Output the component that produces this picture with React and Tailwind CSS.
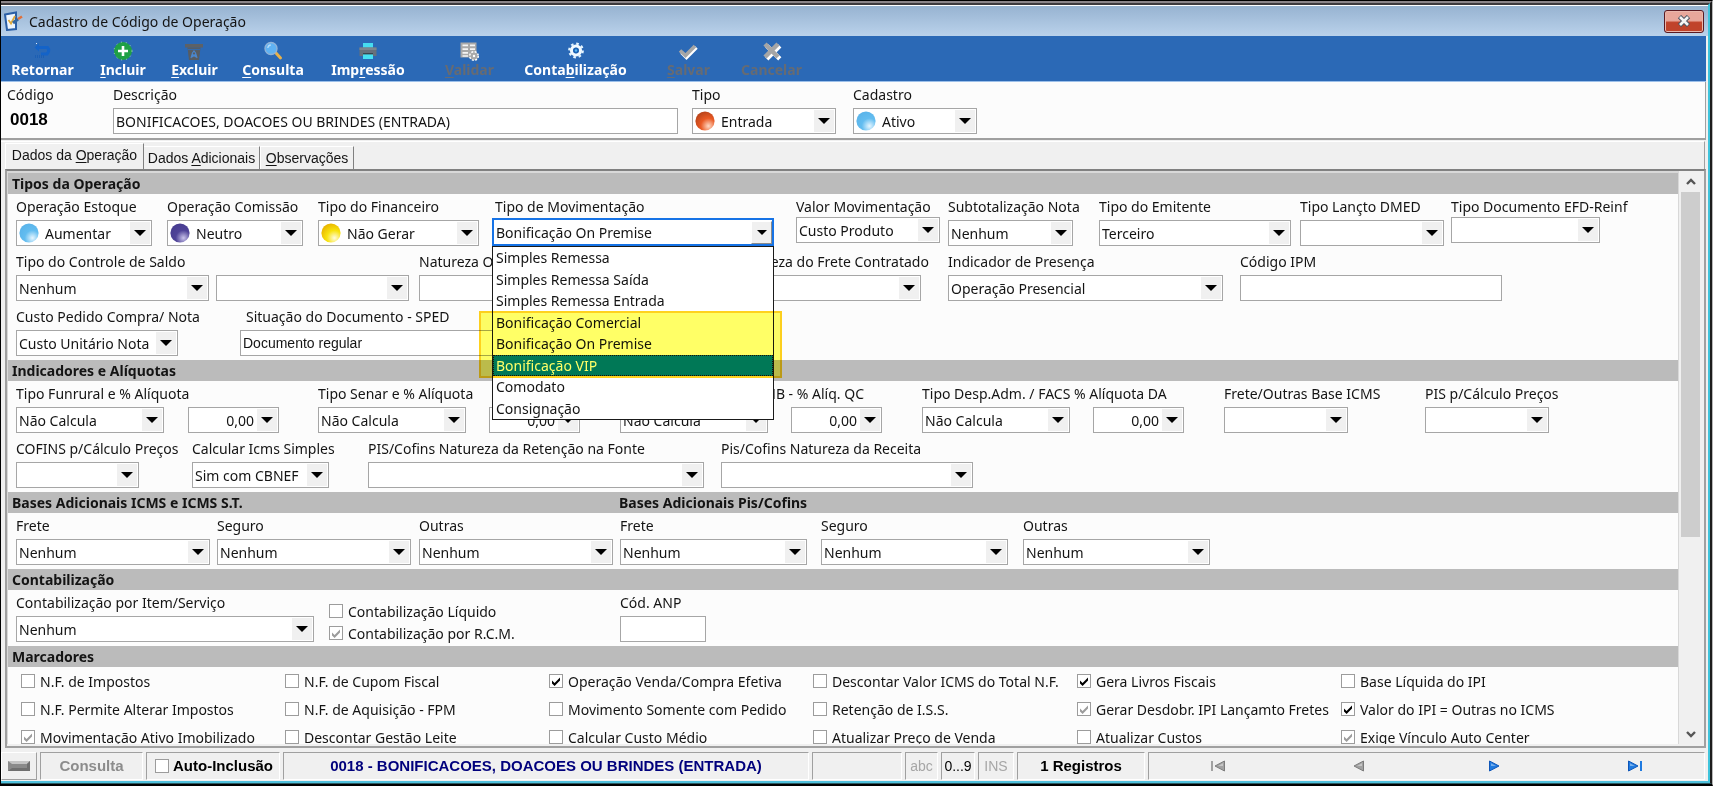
import { useId } from 'react';

const BALLS = {
  blue: ['#e6f6ff', '#63bdf0', '#5ab4ea'],
  purple: ['#c9c3ea', '#4f4398', '#473c90'],
  yellow: ['#fffbe0', '#f8e30c', '#e8b400'],
  orange: ['#ffd9c4', '#ea5a24', '#b8431a'],
};

function Ball({ tone }) {
  const id = useId();
  const [light, mid, edge] = BALLS[tone];
  return (
    <svg viewBox="0 0 20 20" className="pointer-events-none z-10 ml-[3px] size-5 self-center [grid-area:1/1]" aria-hidden="true">
      <defs>
        <radialGradient id={id} cx="0.68" cy="0.76" r="0.8">
          <stop offset="0" stopColor={light} />
          <stop offset="0.5" stopColor={mid} />
          <stop offset="1" stopColor={edge} />
        </radialGradient>
      </defs>
      <circle cx="10" cy="10" r="9.6" fill={`url(#${id})`} />
    </svg>
  );
}

function Arrow({ raised }) {
  return (
    <span
      className={
        raised
          ? 'pointer-events-none z-10 mr-[2px] flex h-[23px] w-[21px] items-center justify-center self-center justify-self-end border border-t-white border-l-white border-r-[#8a8a8a] border-b-[#8a8a8a] bg-[#f0f0f0] [grid-area:1/1]'
          : 'pointer-events-none z-10 mr-[2px] flex h-[22px] w-5 items-center justify-center self-center justify-self-end bg-[#f0f0f0] [grid-area:1/1]'
      }
    >
      <svg viewBox="0 0 12 6" className={raised ? 'h-[5px] w-[10px]' : 'h-[6px] w-3'} aria-hidden="true">
        <path d="M0 0h12L6 6z" fill="#000" />
      </svg>
    </span>
  );
}

function Field({ label, className = '', control = '', value = '', kind = 'select', ball, tight, focus, labelClass = '', small }) {
  const id = useId();
  const box = `w-full rounded-none bg-white text-[#141414] outline-none [grid-area:1/1] ${
    focus ? 'h-7 border-2 border-[#1673e6]' : 'h-[26px] border border-[#a6a6a6]'
  } ${small ? 'font-[Liberation_Sans,sans-serif] text-[14px]' : ''}`;
  return (
    <div className={`flex shrink-0 flex-col ${tight ? 'gap-px' : focus ? 'gap-[2px]' : 'gap-1'} ${className}`}>
      {label ? (
        <label htmlFor={id} className={`h-[18px] leading-[18px] whitespace-nowrap ${labelClass}`}>
          {label}
        </label>
      ) : (
        <span className="h-[18px]" />
      )}
      <div className={`grid ${control}`}>
        {kind === 'select' && (
          <>
            <select id={id} aria-label={label ? undefined : 'Complemento'} defaultValue={value} className={`${box} appearance-none ${ball ? 'pl-7' : 'pl-[2px]'}`}>
              <option value={value}>{value}</option>
            </select>
            {ball && <Ball tone={ball} />}
            <Arrow raised={focus} />
          </>
        )}
        {kind === 'number' && (
          <>
            <input id={id} aria-label={label ? undefined : '% Alíquota'} defaultValue={value} className={`${box} pr-6 text-right`} />
            <Arrow />
          </>
        )}
        {kind === 'text' && <input id={id} aria-label={label ? undefined : 'Valor'} defaultValue={value} className={`${box} px-[2px]`} />}
      </div>
    </div>
  );
}

function Check({ label, checked, disabled, bold }) {
  return (
    <label className={`flex items-center whitespace-nowrap ${bold ? 'gap-1 font-bold text-black' : 'gap-[5px]'}`}>
      <span className="grid size-[14px] shrink-0">
        <input type="checkbox" defaultChecked={checked} disabled={disabled} className="size-[14px] appearance-none border border-[#9c9c9c] bg-white [grid-area:1/1]" />
        {checked && (
          <svg viewBox="0 0 14 14" className="pointer-events-none size-[14px] [grid-area:1/1]" aria-hidden="true">
            <path d="M3 6.4 5.6 9 11 3.4V6.6L5.6 12 3 9.4z" fill={disabled ? '#9c9c9c' : '#000'} />
          </svg>
        )}
      </span>
      {label}
    </label>
  );
}

function Section({ title, second, flush, children }) {
  return (
    <section>
      <h2 className="flex h-[21px] items-center bg-[#bbbbbb] pl-1 font-bold text-[#141414]">
        <span className={second ? 'w-[607px]' : ''}>{title}</span>
        {second && <span>{second}</span>}
      </h2>
      <div className={`flex flex-col gap-[7px] pb-1 pl-2 ${flush ? '' : 'pt-1'}`}>{children}</div>
    </section>
  );
}

function Row({ children }) {
  return <div className="flex items-start">{children}</div>;
}

const MOVEMENTS = [
  'Simples Remessa',
  'Simples Remessa Saída',
  'Simples Remessa Entrada',
  'Bonificação Comercial',
  'Bonificação On Premise',
  'Bonificação VIP',
  'Comodato',
  'Consignação',
];

function MovementField() {
  return (
    <div className="relative w-[304px] shrink-0">
      <Field label="Tipo de Movimentação" value="Bonificação On Premise" focus control="w-[282px]" labelClass="pl-[3px]" />
      <ul role="listbox" aria-label="Tipo de Movimentação" className="absolute top-12 left-0 z-20 grid h-[174px] w-[282px] grid-rows-8 border border-[#1a1a1a] bg-white">
        {MOVEMENTS.map((m) => (
          <li
            key={m}
            role="option"
            aria-selected={m === 'Bonificação VIP'}
            className={`flex items-center pl-[3px] ${m === 'Bonificação VIP' ? 'bg-[#0078d7] text-white outline-1 -outline-offset-1 outline-dotted outline-[#201000]' : ''}`}
          >
            {m}
          </li>
        ))}
      </ul>
      <div className="pointer-events-none absolute top-[113px] -left-[13px] z-30 h-[67px] w-[303px] border-2 border-[#ffd21e] bg-[#ffff66] mix-blend-multiply" />
    </div>
  );
}

const MARKS = [
  ['N.F. de Impostos'],
  ['N.F. de Cupom Fiscal'],
  ['Operação Venda/Compra Efetiva', 'on'],
  ['Descontar Valor ICMS do Total N.F.'],
  ['Gera Livros Fiscais', 'on'],
  ['Base Líquida do IPI'],
  ['N.F. Permite Alterar Impostos'],
  ['N.F. de Aquisição - FPM'],
  ['Movimento Somente com Pedido'],
  ['Retenção de I.S.S.'],
  ['Gerar Desdobr. IPI Lançamto Fretes', 'locked'],
  ['Valor do IPI = Outras no ICMS', 'on'],
  ['Movimentação Ativo Imobilizado', 'locked'],
  ['Descontar Gestão Leite'],
  ['Calcular Custo Médio'],
  ['Atualizar Preço de Venda'],
  ['Atualizar Custos'],
  ['Exige Vínculo Auto Center', 'locked'],
];

const ICONS = {
  back: (
    <>
      <path d="M5 6.5h9.5q2.500 3-.5 6.500H8" fill="none" stroke="#1463c8" strokeWidth="3" />
      <path d="M1.5 6.5 6 2.5v8z" fill="#1463c8" />
      <path d="M2 15.500h10" stroke="#1c5fb4" strokeWidth="3" strokeDasharray="1 1" />
      <path d="M3 2h1v1H3z" fill="#dfeeff" />
    </>
  ),
  add: (
    <>
      <circle cx="10" cy="10" r="9" fill="#1fa045" stroke="#9fd3b8" strokeWidth="1" strokeDasharray="1 4" />
      <path d="M10 5v10M5 10h10" stroke="#fff" strokeWidth="2.6" />
    </>
  ),
  trash: (
    <>
      <path d="M1 3h18v3.500H1z" fill="#5d6166" />
      <path d="M3.500 6.500h13L15 19H5z" fill="#575c62" />
      <path d="M4 8.500h12" stroke="#3569a8" strokeWidth="1.200" />
      <path d="M7 17 8.500 12l1.500-2 1.500 2 1.500 5M8 13l4 3M12 13l-4 3" fill="none" stroke="#4a86cc" strokeWidth="1.200" />
    </>
  ),
  search: (
    <>
      <path d="m12.5 11.5 5 5.5" stroke="#e8b24a" strokeWidth="3" strokeLinecap="round" />
      <circle cx="8" cy="7.5" r="6" fill="#5fb2f3" stroke="#8fb3d8" strokeWidth="1.4" />
      <path d="M4.8 7a3.4 3.4 0 0 1 3-3" stroke="#b5dcfb" strokeWidth="1.3" fill="none" />
    </>
  ),
  print: (
    <>
      <path d="M5 2h10v5H5z" fill="#46dcf0" />
      <path d="M1.500 6.500h17v8.500h-17z" fill="#66717c" />
      <path d="M1.500 6.500h17v2.500h-17z" fill="#7b868f" />
      <path d="M5 13h10v5H5z" fill="#46e0f2" />
      <path d="M5 12h10v1.4H5z" fill="#3a4650" />
    </>
  ),
  validate: (
    <>
      <path d="M1.5 1.5h16v15h-16z" fill="#a9a9a9" />
      <path d="M3.5 3.5h5.500v1.800H3.500zM11 3.500h5v1.800h-5zM3.500 7.200h5.500v1.800H3.500zM11 7.200h5v1.800h-5zM3.500 10.900h5.500v1.800H3.500zM3.500 14.300h5.500v1.400H3.500z" fill="#f4f4f4" />
      <circle cx="15" cy="15" r="4.300" fill="#a9a9a9" stroke="#fff" strokeWidth="1.4" strokeDasharray="2 1.4" />
      <circle cx="15" cy="15" r="1.200" fill="#fff" />
    </>
  ),
  gear: (
    <>
      <circle cx="10" cy="9.500" r="4.500" fill="none" stroke="#f2faff" strokeWidth="3.200" />
      <circle cx="10" cy="9.500" r="6.800" fill="none" stroke="#e3f4ff" strokeWidth="2.200" strokeDasharray="2.600 2.740" />
      <circle cx="10" cy="9.500" r="2.800" fill="#1c62b4" />
      <circle cx="10" cy="9.500" r="1.200" fill="#58b7f0" />
    </>
  ),
  save: (
    <>
      <path d="m2.500 10.500 5 5 10-10" fill="none" stroke="#fff" strokeWidth="3.400" transform="translate(1 1)" />
      <path d="m2 9.500 5.500 5 9.500-9.500" fill="none" stroke="#a6a6a6" strokeWidth="3.600" />
    </>
  ),
  cancel: (
    <>
      <path d="m4 4 13 13M17 4 4 17" stroke="#fff" strokeWidth="4.500" transform="translate(.8 .8)" />
      <path d="m3 3 13 13M16 3 3 16" stroke="#a6a6a6" strokeWidth="4.500" />
    </>
  ),
};

const TOOLS = [
  { w: 'w-[83px]', icon: 'back', pre: 'Retornar', key: '', post: '' },
  { w: 'w-[78px]', icon: 'add', pre: '', key: 'I', post: 'ncluir' },
  { w: 'w-[65px]', icon: 'trash', pre: '', key: 'E', post: 'xcluir' },
  { w: 'w-[92px]', icon: 'search', pre: '', key: 'C', post: 'onsulta' },
  { w: 'w-[98px]', icon: 'print', pre: 'Imp', key: 'r', post: 'essão' },
  { w: 'w-[105px]', icon: 'validate', pre: '', key: 'V', post: 'alidar', off: true },
  { w: 'w-[107px]', icon: 'gear', pre: 'Conta', key: 'b', post: 'ilização' },
  { w: 'w-[119px]', icon: 'save', pre: '', key: 'S', post: 'alvar', off: true },
  { w: 'w-[47px]', icon: 'cancel', pre: 'Cancelar', key: '', post: '', off: true },
];

function Tool({ w, icon, pre, key2, post, off }) {
  return (
    <div className={`flex shrink-0 justify-center ${w}`}>
      <button type="button" disabled={off} className={`flex flex-col items-center font-bold whitespace-nowrap ${off ? 'text-[#666b73]' : 'text-white'}`}>
        <svg viewBox="0 0 20 20" className="size-5" aria-hidden="true">
          {ICONS[icon]}
        </svg>
        <span className="text-[14px] leading-[17px]">
          {pre}
          <u className="underline-offset-2">{key2}</u>
          {post}
        </span>
      </button>
    </div>
  );
}

const PANE = 'flex h-7 shrink-0 items-center border border-t-[#a0a0a0] border-l-[#a0a0a0] border-r-white border-b-white';

function Nav({ label, last, back, on }) {
  const fill = on ? '#1f7ae0' : '#a2a2a2';
  const edge = on ? '#0f56b8' : '#7c7c7c';
  return (
    <button type="button" aria-label={label} className="flex flex-1 justify-center">
      <svg viewBox="0 0 16 12" className={`h-3 w-4 ${back ? '-scale-x-100' : ''}`} aria-hidden="true">
        <path d="M1.500 1 11 6l-9.500 5z" fill={fill} stroke={edge} />
        <path d="M3 3.200 8 6H3z" fill="#fff" opacity=".4" />
        {last && <path d="M13 1h2v10h-2z" fill={fill} />}
      </svg>
    </button>
  );
}

export default function App() {
  return (
    <div className="h-screen overflow-hidden border-t border-r border-b-2 border-l border-t-black border-r-[#b8b8b8] border-b-black border-l-black font-[Noto_Sans,sans-serif] text-[14px] text-[#141414]">
      <div className="h-full border-t-2 border-r-2 border-b border-t-[#8c868a] border-r-[#1d1d1d] border-b-[#2b5a60]">
        <div className="flex h-full flex-col border-t-2 border-r-2 border-b-2 border-t-[#3d3a3d] border-r-[#3fc4dc] border-b-[#4fc0dc] bg-[#f0f0f0]">
          <header className="flex h-[31px] shrink-0 items-center border-t border-white bg-linear-to-b from-[#97b3d1] to-[#bad2eb] pl-[3px]">
            <svg viewBox="0 0 20 20" className="size-5" aria-hidden="true">
              <path d="M1 3.500 12 1.500v16.500L3 19z" fill="#eef5fd" stroke="#2a5ea6" strokeWidth="2" />
              <path d="m4.500 9 2.500 3.500 4-7.500" fill="none" stroke="#e0a93a" strokeWidth="1.800" />
              <path d="m9 12 5-4" stroke="#34659f" strokeWidth="3" />
              <path d="m14 8 4-2.500" stroke="#e0703a" strokeWidth="2.600" />
            </svg>
            <h1 className="flex-1 pl-[5px]">Cadastro de Código de Operação</h1>
            <button type="button" aria-label="Fechar" className="mr-[4px] flex h-[23px] w-10 items-center justify-center rounded-[3px] border border-[#5a1a22] bg-linear-to-b from-[#e8a79b] from-45% to-[#c0432b] to-55% shadow-[inset_0_0_0_1px_#e9b8ae]">
              <svg viewBox="0 0 14 12" className="h-3 w-[14px]" aria-hidden="true">
                <path d="m2.500 1.500 9 9M11.500 1.500l-9 9" stroke="#4b5563" strokeWidth="4.600" />
                <path d="m3 2 8 8M11 2l-8 8" stroke="#f4f4f4" strokeWidth="2.600" />
              </svg>
            </button>
          </header>

          <nav className="mr-[2px] flex h-[46px] shrink-0 items-start border-b border-[#9cc0ea] bg-[#2b69b6] pt-[5px]">
            {TOOLS.map(({ key, ...t }) => (
              <Tool key={t.icon} key2={key} {...t} />
            ))}
          </nav>

          <div className="mr-[2px] flex h-[58px] shrink-0 items-start border-r border-b-2 border-[#a0a0a0] bg-[#fcfcfc] pt-1 pl-[6px]">
            <div className="flex w-[106px] shrink-0 flex-col gap-1">
              <span className="h-[18px] leading-[18px]">Código</span>
              <output className="pl-[3px] font-[Liberation_Sans,sans-serif] text-[17px] leading-6 font-bold text-black">0018</output>
            </div>
            <Field label="Descrição" kind="text" value="BONIFICACOES, DOACOES OU BRINDES (ENTRADA)" className="w-[579px]" control="w-[565px]" />
            <Field label="Tipo" ball="orange" value="Entrada" className="w-[161px]" control="w-36" />
            <Field label="Cadastro" ball="blue" value="Ativo" control="w-[124px]" />
          </div>

          <div role="tablist" className="mt-px mr-[3px] flex h-7 shrink-0 items-end border-t border-r border-t-white border-r-[#a0a0a0] pl-1 font-[Liberation_Sans,sans-serif] text-[14px]">
            <button role="tab" aria-selected="true" type="button" className="h-[26px] w-[139px] border-t border-r border-l border-t-white border-r-[#808080] border-l-white pb-[2px]">
              Dados da <u className="underline-offset-2">O</u>peração
            </button>
            <button role="tab" aria-selected="false" type="button" className="h-[23px] w-[116px] border-t border-r border-t-white border-r-[#808080]">
              Dados <u className="underline-offset-2">A</u>dicionais
            </button>
            <button role="tab" aria-selected="false" type="button" className="h-[23px] w-[94px] border-t border-r border-l border-t-white border-r-[#808080] border-l-white">
              <u className="underline-offset-2">O</u>bservações
            </button>
          </div>

          <main className="mr-[2px] ml-1 flex min-h-0 flex-1 border-t-2 border-r-2 border-b-2 border-l-2 border-t-[#808080] border-r-[#a0a0a0] border-b-[#a0a0a0] border-l-[#a0a0a0]">
            <div className="mb-[2px] flex min-w-0 flex-1">
              <div className="min-w-0 flex-1 overflow-hidden border-t-2 border-r border-l border-[#d8d8d8] bg-[#fcfcfc]">
                <Section title="Tipos da Operação">
                  <Row>
                    <Field label="Operação Estoque" ball="blue" value="Aumentar" className="w-[151px]" control="w-[136px]" />
                    <Field label="Operação Comissão" ball="purple" value="Neutro" className="w-[151px]" control="w-[136px]" />
                    <Field label="Tipo do Financeiro" ball="yellow" value="Não Gerar" className="w-[174px]" control="w-[161px]" />
                    <MovementField />
                    <Field label="Valor Movimentação" tight value="Custo Produto" className="w-[152px]" control="w-36" />
                    <Field label="Subtotalização Nota" value="Nenhum" className="w-[151px]" control="w-[125px]" />
                    <Field label="Tipo do Emitente" value="Terceiro" className="w-[201px]" control="w-48" />
                    <Field label="Tipo Lançto DMED" className="w-[151px]" control="w-36" />
                    <Field label="Tipo Documento EFD-Reinf" tight control="w-[149px]" />
                  </Row>
                  <Row>
                    <Field label="Tipo do Controle de Saldo" value="Nenhum" className="w-[200px]" control="w-[193px]" />
                    <Field className="w-[203px]" control="w-[193px]" />
                    <Field label="Natureza Operação" kind="text" className="w-[314px]" control="w-[300px]" />
                    <Field label="Natureza do Frete Contratado" className="w-[215px]" control="w-[188px]" />
                    <Field label="Indicador de Presença" value="Operação Presencial" className="w-[292px]" control="w-[275px]" />
                    <Field label="Código IPM" kind="text" control="w-[262px]" />
                  </Row>
                  <Row>
                    <Field label="Custo Pedido Compra/ Nota" value="Custo Unitário Nota" className="w-[224px]" control="w-[162px]" />
                    <Field label="Situação do Documento - SPED" kind="text" small value="Documento regular" labelClass="pl-[6px]" control="w-[500px]" />
                  </Row>
                </Section>

                <Section title="Indicadores e Alíquotas">
                  <Row>
                    <Field label="Tipo Funrural e % Alíquota" value="Não Calcula" className="w-[172px]" control="w-[148px]" />
                    <Field kind="number" value="0,00" className="w-[130px]" control="w-[91px]" />
                    <Field label="Tipo Senar e % Alíquota" value="Não Calcula" className="w-[171px]" control="w-[148px]" />
                    <Field kind="number" value="0,00" className="w-[131px]" control="w-[91px]" />
                    <Field label="Tipo Qual. Carne / FUNB - % Alíq. QC" value="Não Calcula" className="w-[171px]" labelClass="flex w-[244px] justify-end" control="w-[148px]" />
                    <Field kind="number" value="0,00" className="w-[131px]" control="w-[91px]" />
                    <Field label="Tipo Desp.Adm. / FACS % Alíquota DA" value="Não Calcula" className="w-[171px]" control="w-[148px]" />
                    <Field kind="number" value="0,00" className="w-[131px]" control="w-[91px]" />
                    <Field label="Frete/Outras Base ICMS" className="w-[201px]" control="w-[124px]" />
                    <Field label="PIS p/Cálculo Preços" control="w-[124px]" />
                  </Row>
                  <Row>
                    <Field label="COFINS p/Cálculo Preços" className="w-44" control="w-[123px]" />
                    <Field label="Calcular Icms Simples" value="Sim com CBNEF" className="w-44" control="w-[137px]" />
                    <Field label="PIS/Cofins Natureza da Retenção na Fonte" className="w-[353px]" control="w-[336px]" />
                    <Field label="Pis/Cofins Natureza da Receita" control="w-[252px]" />
                  </Row>
                </Section>

                <Section title="Bases Adicionais ICMS e ICMS S.T." second="Bases Adicionais Pis/Cofins">
                  <Row>
                    <Field label="Frete" value="Nenhum" className="w-[201px]" control="w-[194px]" />
                    <Field label="Seguro" value="Nenhum" className="w-[202px]" control="w-[194px]" />
                    <Field label="Outras" value="Nenhum" className="w-[201px]" control="w-[194px]" />
                    <Field label="Frete" value="Nenhum" className="w-[201px]" control="w-[187px]" />
                    <Field label="Seguro" value="Nenhum" className="w-[202px]" control="w-[187px]" />
                    <Field label="Outras" value="Nenhum" control="w-[187px]" />
                  </Row>
                </Section>

                <Section title="Contabilização">
                  <Row>
                    <Field label="Contabilização por Item/Serviço" value="Nenhum" className="w-[313px]" control="w-[298px]" />
                    <div className="flex w-[291px] shrink-0 flex-col gap-1 pt-2">
                      <div className="flex h-[18px] items-center">
                        <Check label="Contabilização Líquido" />
                      </div>
                      <div className="flex h-[18px] items-center">
                        <Check label="Contabilização por R.C.M." checked disabled />
                      </div>
                    </div>
                    <Field label="Cód. ANP" kind="text" control="w-[86px]" />
                  </Row>
                </Section>

                <Section title="Marcadores" flush>
                  <div className="grid auto-rows-[28px] grid-cols-[repeat(6,264px)] pl-[5px]">
                    {MARKS.map(([label, state]) => (
                      <Check key={label} label={label} checked={!!state} disabled={state === 'locked'} />
                    ))}
                  </div>
                </Section>
              </div>

              <div className="mr-1 ml-[2px] flex w-[19px] shrink-0 flex-col bg-[#f0f0f0]" aria-hidden="true">
                <span className="flex h-[21px] items-center justify-center">
                  <svg viewBox="0 0 10 8" className="h-2 w-[10px]">
                    <path d="m1 6 4-4 4 4" fill="none" stroke="#555" strokeWidth="2.400" />
                  </svg>
                </span>
                <span className="flex flex-1 flex-col">
                  <span className="h-[65%] bg-[#cdcdcd]" />
                </span>
                <span className="flex h-[21px] items-center justify-center">
                  <svg viewBox="0 0 10 8" className="h-2 w-[10px]">
                    <path d="m1 2 4 4 4-4" fill="none" stroke="#555" strokeWidth="2.400" />
                  </svg>
                </span>
              </div>
            </div>
          </main>

          <footer className="mt-1 mb-px flex shrink-0 gap-[3px] pr-[3px] font-[Liberation_Sans,sans-serif] text-[15px]">
            <button type="button" aria-label="Painel" className="flex h-7 w-9 items-center justify-center border border-t-white border-l-white border-r-[#a0a0a0] border-b-[#a0a0a0]">
              <svg viewBox="0 0 22 10" className="h-[10px] w-[22px]" aria-hidden="true">
                <path d="M0 0h22v10H0z" fill="#8a8a8a" />
                <path d="M0 0h22l-3 3H4z" fill="#c4c4c4" />
                <path d="M0 10h22V0l-3 3v4H4z" fill="#6f6f6f" />
              </svg>
            </button>
            <div className={`${PANE} w-[103px] justify-center font-bold text-[#8c8c8c]`}>Consulta</div>
            <div className={`${PANE} w-[134px] pl-2`}>
              <Check label="Auto-Inclusão" bold />
            </div>
            <div className={`${PANE} w-[526px] justify-center font-bold text-[#00007c]`}>0018 - BONIFICACOES, DOACOES OU BRINDES (ENTRADA)</div>
            <div className={`${PANE} w-[90px]`} />
            <div className={`${PANE} w-[33px] justify-center text-[14px] text-[#a6a6a6]`}>abc</div>
            <div className={`${PANE} w-[34px] justify-center text-[14px] text-black`}>0...9</div>
            <div className={`${PANE} w-9 justify-center text-[14px] text-[#a6a6a6]`}>INS</div>
            <div className={`${PANE} w-32 justify-center font-bold text-black`}>1 Registros</div>
            <div className={`${PANE} min-w-0 flex-1`}>
              <Nav label="Primeiro" back last />
              <Nav label="Anterior" back />
              <Nav label="Próximo" on />
              <Nav label="Último" last on />
            </div>
          </footer>
        </div>
      </div>
    </div>
  );
}
